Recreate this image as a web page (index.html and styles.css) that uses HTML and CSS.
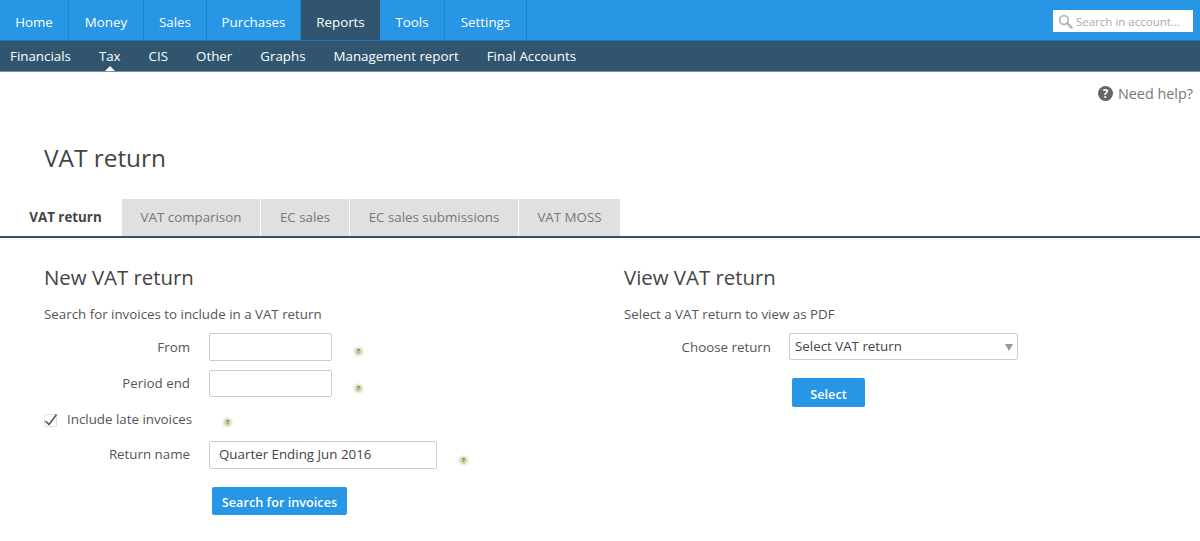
FILE: index.html
```html
<!DOCTYPE html>
<html lang="en">
<head>
<meta charset="utf-8">
<title>VAT return</title>
<link rel="stylesheet" href="styles.css">
</head>
<body>
<header>
  <div class="topbar">
    <nav class="mainnav">
      <a class="home">Home</a>
      <a class="money">Money</a>
      <a class="sales">Sales</a>
      <a class="purchases">Purchases</a>
      <a class="reports active">Reports</a>
      <a class="tools">Tools</a>
      <a class="settings">Settings</a>
    </nav>
    <div class="search">
      <svg class="search-icon" width="15" height="15" viewBox="0 0 15 15"><circle cx="6" cy="6" r="4.3" fill="none" stroke="#b5b5b5" stroke-width="1.8"/><path d="M9.2 9.2 13.6 13.6" stroke="#b5b5b5" stroke-width="2.4" stroke-linecap="round"/></svg>
      <span>Search in account...</span>
    </div>
  </div>
  <nav class="subnav">
    <a>Financials</a>
    <a class="current">Tax</a>
    <a>CIS</a>
    <a>Other</a>
    <a>Graphs</a>
    <a>Management report</a>
    <a>Final Accounts</a>
  </nav>
</header>
<div class="helpline">
  <svg width="15" height="15" viewBox="0 0 15 15"><circle cx="7.5" cy="7.5" r="7.5" fill="#666"/><text x="7.5" y="11.6" text-anchor="middle" class="help-q">?</text></svg>
  <span>Need help?</span>
</div>
<h1>VAT return</h1>
<div class="tabs">
  <a class="tab selected">VAT return</a>
  <a class="tab t2">VAT comparison</a>
  <a class="tab t3">EC sales</a>
  <a class="tab t4">EC sales submissions</a>
  <a class="tab t5">VAT MOSS</a>
</div>
<main class="columns">
  <section class="left">
    <h2>New VAT return</h2>
    <p>Search for invoices to include in a VAT return</p>
    <div class="row r-from">
      <label>From</label>
      <div class="field short from"></div>
      <i class="tip">?</i>
    </div>
    <div class="row r-period">
      <label>Period end</label>
      <div class="field short"></div>
      <i class="tip">?</i>
    </div>
    <div class="checkrow">
      <span class="check"><svg width="14" height="14" viewBox="0 0 14 14"><path d="M1.5 7 5 10.5 12.5 0.5" fill="none" stroke="#555" stroke-width="1.5"/></svg></span>
      <span class="checklabel">Include late invoices</span>
      <i class="tip">?</i>
    </div>
    <div class="row r-name">
      <label>Return name</label>
      <div class="field long">Quarter Ending Jun 2016</div>
      <i class="tip">?</i>
    </div>
    <button class="btn btn-search">Search for invoices</button>
  </section>
  <section class="right">
    <h2>View VAT return</h2>
    <p>Select a VAT return to view as PDF</p>
    <div class="row r-choose">
      <label>Choose return</label>
      <div class="field select">Select VAT return<span class="arrow"></span></div>
    </div>
    <button class="btn btn-select">Select</button>
  </section>
</main>
</body>
</html>
```
FILE: styles.css
```css
* { box-sizing: border-box; }
html, body { margin: 0; padding: 0; }
body { font-family: "Open Sans", sans-serif; color: #555; background: #fff; height: 541px; overflow: hidden; font-size: 13.33px; }
a { display: block; }

.topbar { height: 41px; background: #2796e4; border-bottom: 1px solid #1f77b4; display: flex; justify-content: space-between; }
.mainnav { display: flex; }
.mainnav a { height: 40px; line-height: 44px; color: #fff; font-size: 13.33px; text-align: center; border-right: 1px solid #1a84c4; }
.home { width: 69px; }
.money { width: 75px; }
.sales { width: 63px; }
.purchases { width: 94px; }
.mainnav .reports { width: 79px; border-right: 0; }
.tools { width: 65px; }
.settings { width: 82px; }
.mainnav .active { background: #31556f; }

.search { width: 140px; height: 22px; margin: 10px 7px 0 0; background: #fff; display: flex; align-items: center; padding-left: 5px; gap: 3px; color: #aaa; font-size: 11.5px; }

.subnav { height: 31px; background: #31556f; border-bottom: 1px solid #7d93a5; display: flex; gap: 28px; padding-left: 10px; }
.subnav a { color: #fff; font-size: 13.33px; line-height: 30px; position: relative; }
.subnav .current::after { content: ""; position: absolute; left: 50%; bottom: 0; margin-left: -5px; border: 5px solid transparent; border-top: 0; border-bottom-color: #fff; }

.helpline { display: flex; justify-content: flex-end; align-items: center; gap: 5px; padding: 12px 7px 0 0; height: 31px; font-size: 14.4px; color: #777; }
.help-q { font-family: "Open Sans", sans-serif; font-weight: 700; font-size: 11.5px; fill: #fff; }

h1 { margin: 38px 0 0 44px; font-size: 24.4px; font-weight: 400; line-height: 34px; color: #444; }

.tabs { display: flex; margin-top: 24px; height: 39px; border-bottom: 2px solid #31556f; padding-left: 10px; gap: 1px; }
.tab { height: 37px; line-height: 37px; font-size: 13.33px; text-align: center; background: #e0e0e0; color: #777; }
.tabs .selected { width: 111px; background: #fff; color: #444; font-weight: 700; }
.t2 { width: 138px; }
.t3 { width: 88px; }
.t4 { width: 168px; }
.t5 { width: 101px; }

.columns { display: flex; }
.left { width: 624px; padding-left: 44px; }
h2 { margin: 25px 0 0; font-size: 20.4px; font-weight: 400; line-height: 28px; color: #444; }
p { margin: 13px 0 0; font-size: 13.33px; line-height: 20px; color: #555; }

.row { display: flex; align-items: center; }
.row label { font-size: 13.33px; text-align: right; width: 146px; margin-right: 19px; }
.r-from label, .r-period label, .r-name label { padding-bottom: 2px; }
.r-from label { padding-bottom: 0; }
.r-from { margin-top: 9px; }
.r-period { margin-top: 9px; }
.field { height: 27px; background: #fff; border: 1px solid #ccc; border-radius: 2px; font-size: 13.33px; color: #444; line-height: 25px; padding-left: 9px; }
.short { width: 123px; }
.from { height: 28px; }
.long { width: 228px; height: 28px; line-height: 24px; }
.tip { display: block; width: 11px; height: 11px; border-radius: 50%; background: radial-gradient(circle, #c3d6a6 0 2.5px, #e0e9d4 3.5px, #f4f6f0 5.5px); color: #66763c; font-size: 6px; font-style: normal; font-weight: 700; line-height: 11px; text-align: center; }
.r-from .tip { margin: 9px 0 0 21px; }
.r-period .tip { margin: 9px 0 0 21px; }
.r-name .tip { margin: 10px 0 0 21px; }

.checkrow { display: flex; align-items: center; margin-top: 11px; height: 22px; }
.check { display: block; width: 13px; height: 13px; margin-top: 3px; border: 1px solid #e0e0e0; border-radius: 2px; }
.check svg { display: block; margin: -1px; overflow: visible; }
.checklabel { margin-left: 10px; font-size: 13.33px; }
.checkrow .tip { margin: 6px 0 0 30px; }
.r-name { margin-top: 11px; }

.btn { display: block; border: 0; background: #2796e4; color: #fff; font-family: inherit; font-weight: 600; font-size: 12.7px; border-radius: 2px; height: 28px; padding: 2px 0 0; }
.btn-search { width: 135px; margin: 18px 0 0 168px; }
.right .row label { width: 147px; margin-right: 18px; }
.r-choose { margin-top: 9px; }
.right { width: 576px; }
.select { width: 229px; height: 27px; line-height: 25px; padding-left: 5px; position: relative; }
.arrow { position: absolute; right: 4px; top: 10px; border: 4px solid transparent; border-bottom: 0; border-top: 7px solid #999; }
.btn-select { width: 73px; height: 29px; margin: 18px 0 0 168px; }
```
